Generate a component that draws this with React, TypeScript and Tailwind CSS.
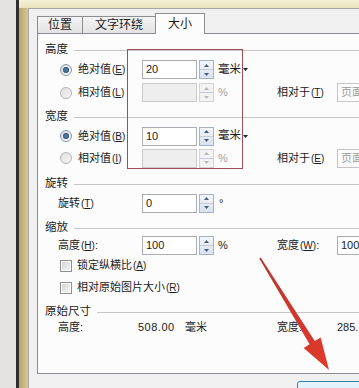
import React from 'react';

// small (E) style accelerator key
const Key: React.FC<{ k: string }> = ({ k }) => (
  <span className="text-[10px] ml-[1px]">
    (<span className="underline">{k}</span>)
  </span>
);

const Tri: React.FC<{ up?: boolean; color: string }> = ({ up, color }) => (
  <svg width="5" height="3" viewBox="0 0 5 3">
    <path d={up ? 'M0 3 L2.5 0 L5 3Z' : 'M0 0 L2.5 3 L5 0Z'} fill={color} />
  </svg>
);

const Spinner: React.FC<{ disabled?: boolean }> = ({ disabled }) => (
  <div
    className={
      disabled
        ? 'w-[15px] h-[19px] ml-[2px] flex flex-col border border-[#d3d3d3] bg-[#f3f3f3]'
        : 'w-[15px] h-[19px] ml-[2px] flex flex-col border border-[#a7b2c2] bg-linear-to-b from-[#f4f7fb] to-[#d9e1ec]'
    }
  >
    <div className="flex-1 flex items-center justify-center border-b border-[#c3ccd8]">
      <Tri up color={disabled ? '#b8b8b8' : '#4a5c7e'} />
    </div>
    <div className="flex-1 flex items-center justify-center">
      <Tri color={disabled ? '#b8b8b8' : '#4a5c7e'} />
    </div>
  </div>
);

const NumInput: React.FC<{ value?: string; disabled?: boolean }> = ({ value, disabled }) => (
  <div className="flex items-center">
    <div
      className={
        disabled
          ? 'w-[55px] h-[19px] border border-[#cacaca] bg-[#eeeeee]'
          : 'w-[55px] h-[19px] border border-[#abadb3] bg-white pl-[3px] text-[11px] leading-[17px]'
      }
    >
      {value}
    </div>
    <Spinner disabled={disabled} />
  </div>
);

const Radio: React.FC<{ checked?: boolean }> = ({ checked }) =>
  checked ? (
    <div className="w-[12px] h-[12px] rounded-full border border-[#8a96a6] bg-linear-to-br from-[#d9dde2] to-[#fbfbfb] flex items-center justify-center">
      <div className="w-[6px] h-[6px] rounded-full bg-radial from-[#5d8fc2] to-[#1a324f]" />
    </div>
  ) : (
    <div className="w-[12px] h-[12px] rounded-full border border-[#b5b5b5] bg-linear-to-br from-[#dedede] to-[#f7f7f7]" />
  );

const Check: React.FC = () => (
  <div className="w-[12px] h-[12px] border border-[#8e8f8f] bg-white flex items-center justify-center">
    <div className="w-[8px] h-[8px] bg-linear-to-br from-[#d6d6d6] to-[#f4f4f4]" />
  </div>
);

const Header: React.FC<{ label: string; className?: string }> = ({ label, className }) => (
  <div className={'flex items-center h-[16px] pl-[7px] ' + (className ?? '')}>
    <span className="text-[11.5px]">{label}</span>
    <div className="flex-1 h-px bg-[#c6c6c6] ml-[6px]" />
  </div>
);

const SideBox: React.FC<{ text: string; disabled?: boolean }> = ({ text, disabled }) => (
  <div
    className={
      disabled
        ? 'w-[60px] h-[19px] border border-[#c6c6c6] text-[#9b9b9b] pl-[3px] text-[11px] leading-[17px]'
        : 'w-[60px] h-[19px] border border-[#abadb3] bg-white pl-[3px] text-[11px] leading-[17px]'
    }
  >
    {text}
  </div>
);

export default function App() {
  return (
    <div className="relative w-[359px] h-[388px] overflow-hidden flex bg-[#f0f0f0] text-[#1b1b1b] text-[11px] font-['Liberation_Sans','Noto_Sans_CJK_SC',sans-serif]">
      {/* window frame on the left */}
      <div className="w-[16px] shrink-0 bg-[#e4e3df]" />
      <div className="w-[3px] shrink-0 bg-[#2f2f2f]" />
      <div className="flex-1 flex flex-col min-w-0">
        <div className="h-[8px] shrink-0 bg-linear-to-b from-[#f6f1d8] to-[#ece3bc]" />
        <div className="flex-1 flex">
          <div className="w-[9px] shrink-0 bg-linear-to-r from-[#b9a266] to-[#d6c794]" />
          {/* dialog */}
          <div className="flex-1 border-l border-t border-[#a6a6a6] bg-[#f0f0f0] pl-[8px] pt-[4px] flex flex-col">
            {/* tabs */}
            <div className="flex items-end h-[20px] w-[450px]">
              <div className="w-[46px] h-[17px] border border-b-0 border-[#8e8f8f] bg-linear-to-b from-[#f4f4f4] to-[#e3e3e3] flex items-center justify-center text-[12px]">
                位置
              </div>
              <div className="w-[72px] h-[17px] border border-b-0 border-l-0 border-r-0 border-[#8e8f8f] bg-linear-to-b from-[#f4f4f4] to-[#e3e3e3] flex items-center justify-center text-[12px]">
                文字环绕
              </div>
              <div className="relative z-10 -mb-px w-[50px] h-[21px] border border-b-0 border-[#8e8f8f] bg-[#fcfcfc] flex items-center pl-[12px] text-[12px]">
                大小
              </div>
            </div>
            {/* tab panel */}
            <div className="w-[450px] h-[341px] border border-[#898c95] bg-[#fcfcfc] pt-[8px] flex flex-col">
              <Header label="高度" />
              <div className="flex items-center h-[23px]">
                <div className="w-[104px] flex items-center pl-[22px] gap-[6px]">
                  <Radio checked />
                  <span>
                    绝对值<Key k="E" />
                  </span>
                </div>
                <NumInput value="20" />
                <div className="w-[63px] pl-[4px] flex items-center gap-[2px] text-[11.5px]">
                  毫米<Tri color="#222" />
                </div>
              </div>
              <div className="flex items-center h-[23px]">
                <div className="w-[104px] flex items-center pl-[22px] gap-[6px]">
                  <Radio />
                  <span>
                    相对值<Key k="L" />
                  </span>
                </div>
                <NumInput disabled />
                <div className="w-[63px] pl-[4px] text-[#a2a2a2]">%</div>
                <div className="w-[60px]">
                  相对于<Key k="T" />
                </div>
                <SideBox text="页面" disabled />
              </div>

              <Header label="宽度" className="mt-[5px]" />
              <div className="flex items-center h-[22px]">
                <div className="w-[104px] flex items-center pl-[22px] gap-[6px]">
                  <Radio checked />
                  <span>
                    绝对值<Key k="B" />
                  </span>
                </div>
                <NumInput value="10" />
                <div className="w-[63px] pl-[4px] flex items-center gap-[2px] text-[11.5px]">
                  毫米<Tri color="#222" />
                </div>
              </div>
              <div className="flex items-center h-[22px]">
                <div className="w-[104px] flex items-center pl-[22px] gap-[6px]">
                  <Radio />
                  <span>
                    相对值<Key k="I" />
                  </span>
                </div>
                <NumInput disabled />
                <div className="w-[63px] pl-[4px] text-[#a2a2a2]">%</div>
                <div className="w-[60px]">
                  相对于<Key k="E" />
                </div>
                <SideBox text="页面" disabled />
              </div>

              <Header label="旋转" className="mt-[7px]" />
              <div className="flex items-center h-[22px]">
                <div className="w-[104px] pl-[20px]">
                  旋转<Key k="T" />
                </div>
                <NumInput value="0" />
                <div className="w-[63px] pl-[5px]">°</div>
              </div>

              <Header label="缩放" className="mt-[6px]" />
              <div className="flex items-center h-[19px]">
                <div className="w-[104px] pl-[20px]">
                  高度<Key k="H" />:
                </div>
                <NumInput value="100" />
                <div className="w-[63px] pl-[4px]">%</div>
                <div className="w-[60px]">
                  宽度<Key k="W" />:
                </div>
                <SideBox text="100" />
              </div>
              <div className="flex items-center h-[21px] pl-[22px] gap-[5px]">
                <Check />
                <span>
                  锁定纵横比<Key k="A" />
                </span>
              </div>
              <div className="flex items-center h-[23px] pl-[22px] gap-[5px]">
                <Check />
                <span>
                  相对原始图片大小<Key k="R" />
                </span>
              </div>

              <Header label="原始尺寸" className="mt-[5px]" />
              <div className="flex items-center h-[15px]">
                <div className="w-[100px] pl-[20px]">高度:</div>
                <div className="w-[139px] flex">
                  <span className="w-[47px] tracking-[0.5px]">508.00</span>
                  <span>毫米</span>
                </div>
                <div className="w-[60px]">宽度:</div>
                <span>285.</span>
              </div>
            </div>
            {/* button row */}
            <div className="pl-[260px] pt-[7px]">
              <div className="w-[75px] h-[23px] rounded-[3px] border border-[#3c7fb1] bg-linear-to-b from-[#eaf6fd] to-[#bee6fd] flex items-center justify-center text-[12px] pt-[8px]">
                确定
              </div>
            </div>
          </div>
        </div>
      </div>

      {/* annotation: red box */}
      <div className="absolute left-[127px] top-[49px] w-[116px] h-[120px] border border-[#a24c55] pointer-events-none" />

      {/* annotation: red arrow */}
      <svg className="absolute left-0 top-0 pointer-events-none" width="359" height="388" viewBox="0 0 359 388">
        <defs>
          <linearGradient id="arr" x1="0" y1="0" x2="1" y2="1">
            <stop offset="0" stopColor="#b8362f" />
            <stop offset="1" stopColor="#e2392c" />
          </linearGradient>
        </defs>
        <polygon
          points="260.7,257.6 314.8,341.1 320.7,337.5 329,370 303.7,347.9 309.6,344.3 259.3,258.4"
          fill="url(#arr)"
        />
      </svg>
    </div>
  );
}
